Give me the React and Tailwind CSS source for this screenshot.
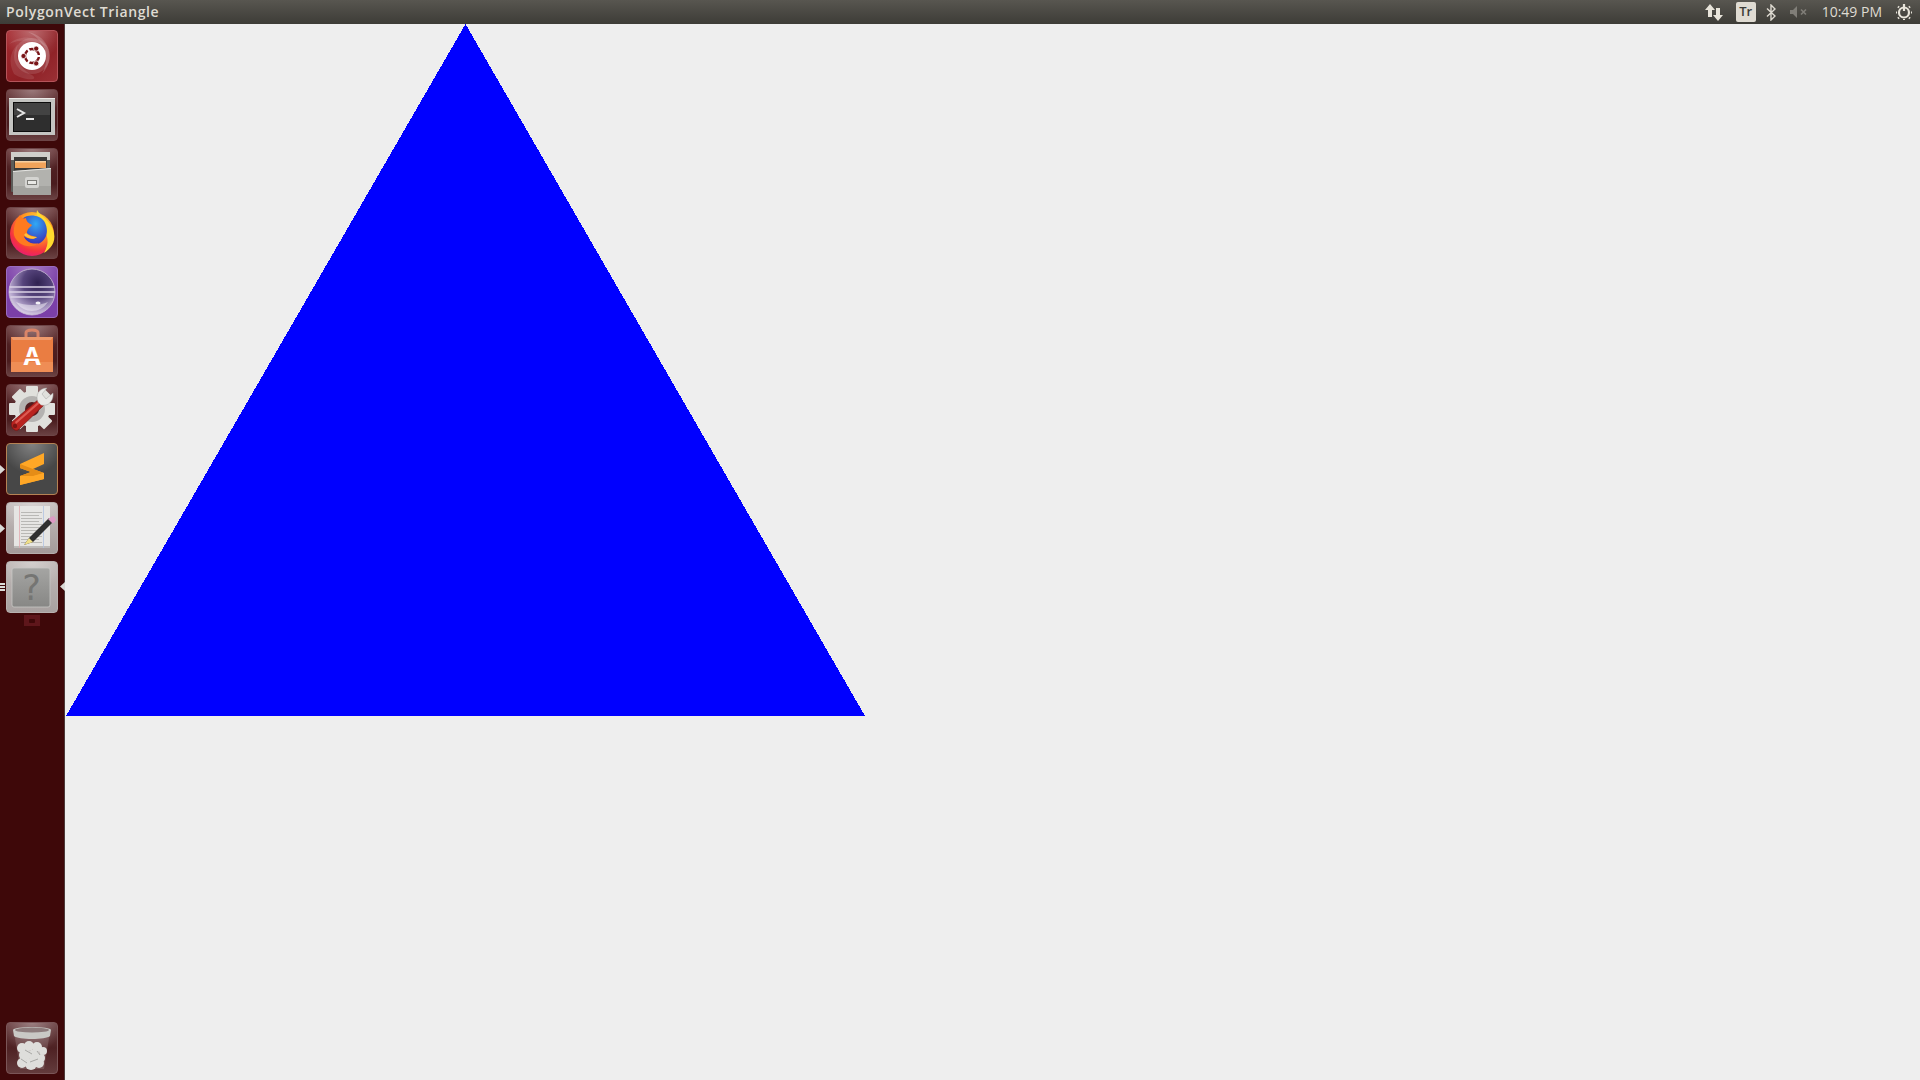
import { useId } from 'react';

// launcher tile, 52x52, with the glossy top every unity icon has
function Tile({ base, border, children, pips = 0, active = false }) {
  const id = useId();
  return (
    <div className="relative h-[52px] w-[52px]">
      {pips > 0 && (
        <div className="absolute left-[-6px] top-0 flex h-full flex-col justify-center gap-[1px]">
          {pips === 1 ? (
            <svg width="5" height="9" viewBox="0 0 5 9"><polygon points="0,0 5,4.5 0,9" fill="#d9d9d6" /></svg>
          ) : (
            <>
              <div className="h-[2px] w-[5px] bg-[#dcdcd8]" />
              <div className="h-[2px] w-[5px] bg-[#dcdcd8]" />
              <div className="h-[2px] w-[5px] bg-[#dcdcd8]" />
            </>
          )}
        </div>
      )}
      {active && (
        <svg className="absolute right-[-7px] top-[21px]" width="5" height="9" viewBox="0 0 5 9">
          <polygon points="5,0 0,4.5 5,9" fill="#d9d9d6" />
        </svg>
      )}
      <div className="h-full w-full overflow-hidden rounded-[4px] border" style={{ background: base, borderColor: border }}>
        <svg width="52" height="52" viewBox="0 0 52 52" className="m-[-1px] block">
          <defs>
            <radialGradient id={id} cx="0.5" cy="0" r="0.6">
              <stop offset="0" stopColor="#fff" stopOpacity="0.33" />
              <stop offset="1" stopColor="#fff" stopOpacity="0" />
            </radialGradient>
          </defs>
          <rect width="52" height="52" fill={`url(#${id})`} />
          {children}
        </svg>
      </div>
    </div>
  );
}

const DARK_TILE = 'linear-gradient(180deg,#6b3a3c 0%,#4f2022 35%,#4a1c1e 70%,#6a4142 100%)';

function UbuntuTile() {
  return (
    <Tile base="linear-gradient(135deg,#a5282e,#8e2025 60%,#9a3035)" border="#b5545a">
      {/* swirl */}
      <path d="M22 2 C44 6 50 30 36 44 C46 26 38 10 22 2Z" fill="#fff" opacity="0.18" />
      <path d="M3 14 C14 4 34 6 42 18 C32 10 16 8 3 14Z" fill="#fff" opacity="0.1" />
      <path d="M8 44 C2 32 4 22 12 14 C8 26 12 36 24 44 C36 50 20 52 8 44Z" fill="#fff" opacity="0.1" />
      <circle cx="26" cy="26" r="18" fill="#fff" opacity="0.12" />
      <circle cx="26" cy="26" r="14" fill="#fff" />
      <circle cx="26" cy="26" r="7" fill="none" stroke="#7a1518" strokeWidth="2.4" />
      <path d="M31 26 H36 M23.5 21.7 L21 17.3 M23.5 30.3 L21 34.7" stroke="#fff" strokeWidth="2" />
      <circle cx="17.5" cy="26" r="2.6" fill="#7a1518" stroke="#fff" strokeWidth="0.8" />
      <circle cx="30.2" cy="18.6" r="2.6" fill="#7a1518" stroke="#fff" strokeWidth="0.8" />
      <circle cx="30.2" cy="33.4" r="2.6" fill="#7a1518" stroke="#fff" strokeWidth="0.8" />
    </Tile>
  );
}

function TerminalTile() {
  return (
    <Tile base={DARK_TILE} border="#6d4547">
      <rect x="3" y="9" width="46" height="37" fill="#c4c4c1" />
      <rect x="3" y="9" width="46" height="1" fill="#ecebe9" />
      <rect x="7" y="13" width="38" height="30" fill="#0c0c0c" />
      <rect x="8" y="14" width="36" height="28" fill="#2e2e2e" />
      <rect x="8" y="14" width="36" height="12" fill="#434343" />
      <path d="M11 20 L18 24 L11 28" fill="none" stroke="#e6e6e6" strokeWidth="2" />
      <rect x="20" y="29" width="8" height="2" fill="#e6e6e6" />
    </Tile>
  );
}

function FilesTile() {
  return (
    <Tile base={DARK_TILE} border="#6d4547">
      <rect x="5" y="4" width="39" height="40" rx="1" fill="#5c5c59" />
      <rect x="5" y="4" width="39" height="8" fill="#cfcfcb" />
      <rect x="8" y="9" width="33" height="16" fill="#3b3a38" />
      <rect x="9" y="13" width="31" height="7" fill="#f0a35a" />
      <rect x="9" y="13" width="31" height="1.5" fill="#f6cfa0" />
      <polygon points="7,23 45,20 45,47 7,47" fill="#b2b2ae" />
      <polygon points="7,23 45,20 45,21 7,24" fill="#e4e4e1" />
      <rect x="7" y="38" width="38" height="9" fill="#a3a39f" />
      <rect x="19" y="29" width="14" height="11" rx="2" fill="#d4d4d1" />
      <rect x="21" y="32" width="10" height="5" fill="#7c7c78" />
      <rect x="22" y="33" width="8" height="3" fill="#e8e8e5" />
    </Tile>
  );
}

function FirefoxTile() {
  return (
    <Tile base={DARK_TILE} border="#6d4547">
      <defs>
        <radialGradient id="fxBody" cx="0.62" cy="0.25" r="0.85">
          <stop offset="0" stopColor="#ffe14d" />
          <stop offset="0.4" stopColor="#ff9a1f" />
          <stop offset="0.75" stopColor="#f5333f" />
          <stop offset="1" stopColor="#e31587" />
        </radialGradient>
        <radialGradient id="fxGlobe" cx="0.55" cy="0.3" r="0.75">
          <stop offset="0" stopColor="#30a9f5" />
          <stop offset="1" stopColor="#3a2ab5" />
        </radialGradient>
      </defs>
      <circle cx="26" cy="27" r="22" fill="url(#fxBody)" />
      <path d="M31 3 C34 9 46 14 48 26 C50 36 44 42 38 46 C44 36 42 28 36 20 C31 14 30 8 31 3Z" fill="#ffd92e" />
      <path d="M16 12 C22 6 34 8 38 14 C44 24 40 34 32 37 C26 38 18 34 16 26Z" fill="url(#fxGlobe)" />
      <path d="M14 8 C9 14 7 22 8 28 C11 38 24 43 33 36 C26 38 19 35 18 29 C21 32 28 33 31 30 C27 29 24 29 21 26 C21 21 25 20 26 18 C22 16 20 14 20 11 C18 12 15 11 14 8Z" fill="#ff7a1f" />
      <path d="M18 28 C22 32 28 33 31 30 C27 30 23 29 20 26Z" fill="#ffc43a" />
    </Tile>
  );
}

function EclipseTile() {
  return (
    <Tile base="#7b3fa8" border="#9a6cc0">
      <defs>
        <radialGradient id="eclSphere" cx="0.62" cy="0.3" r="0.8">
          <stop offset="0" stopColor="#2f2150" />
          <stop offset="0.4" stopColor="#56447c" />
          <stop offset="0.75" stopColor="#b3a3cb" />
          <stop offset="1" stopColor="#f0ebf4" />
        </radialGradient>
      </defs>
      <circle cx="26" cy="26" r="23" fill="url(#eclSphere)" stroke="#c9bdd6" strokeWidth="0.8" />
      <path d="M3.5 21 H48.5 M3.2 26 H48.8 M4.5 31 H47.5" stroke="#dcd2e6" strokeWidth="1.5" />
      <path d="M10 36 C18 48 34 48 42 36 C34 40 18 40 10 36Z" fill="#fff" opacity="0.45" />
      <ellipse cx="32" cy="37" rx="2.5" ry="1.5" fill="#fff" opacity="0.9" />
    </Tile>
  );
}

function SoftwareTile() {
  return (
    <Tile base={DARK_TILE} border="#6d4547">
      <path d="M20 15 V8 C20 4 32 4 32 8 V15" fill="none" stroke="#d98468" strokeWidth="3" />
      <polygon points="5,12 47,12 47,47 5,47" fill="#ea7d42" />
      <polygon points="5,12 47,12 45,15 7,15" fill="#ee9a6c" />
      <rect x="5" y="37" width="42" height="10" fill="#ef8d55" />
      <text x="26" y="40" textAnchor="middle" fill="#fff" fontSize="25" fontWeight="700" fontFamily="'Open Sans',sans-serif">A</text>
      <rect x="17" y="32" width="18" height="1.6" fill="#ea7d42" />
    </Tile>
  );
}

function SettingsTile() {
  const teeth = [0, 45, 90, 135, 180, 225, 270, 315];
  return (
    <Tile base={DARK_TILE} border="#6d4547">
      <g fill="#e0e0dc">
        {teeth.map(a => (
          <rect key={a} x="20" y="2" width="12" height="10" rx="1" transform={`rotate(${a} 26 25)`} />
        ))}
        <circle cx="26" cy="25" r="18" />
      </g>
      <circle cx="26" cy="25" r="13" fill="#b4b2b0" />
      <circle cx="26" cy="25" r="7" fill="#521d20" />
      <path d="M6 38 L33 15 L38 21 L12 46 C8 48 4 42 6 38Z" fill="#b9231f" stroke="#7a1412" strokeWidth="0.7" />
      <path d="M9 38 L33 17 L34 19 L10 40Z" fill="#dc5a52" />
      <circle cx="9" cy="42" r="2.2" fill="#7d1613" />
      <path d="M32 18 C29 11 33 4 41 4 L36 10 L40 15 L47 9 C48 17 42 23 35 21Z" fill="#e9e9e6" stroke="#a5a5a2" strokeWidth="0.5" />
    </Tile>
  );
}

function SublimeTile() {
  return (
    <Tile base="#474747" border="#b58254" pips={1}>
      <polygon points="14,21 38,10 38,21 27,26 38,30 38,36 14,42 14,33 25,29 14,25" fill="#ffa726" />
      <polygon points="14,21 14,25 25,29 14,33 14,33 27,33 38,30 27,26" fill="#e58d17" />
      <polygon points="14,42 38,36 38,30 14,37" fill="#ffa726" />
    </Tile>
  );
}

function EditorTile() {
  return (
    <Tile base="linear-gradient(180deg,#c4bdbc,#a49b9a)" border="#b5adac" pips={1}>
      <rect x="8" y="4" width="36" height="42" fill="#e6e5e3" />
      <rect x="8" y="44" width="36" height="2" fill="#bcbab8" />
      <rect x="13" y="4" width="0.8" height="42" fill="#e3aab0" />
      <rect x="37" y="4" width="0.8" height="42" fill="#b2c4e2" />
      {[10, 13, 16, 19, 22, 25, 28, 31, 34, 37, 40].map(y => (
        <rect key={y} x="15" y={y} width={y % 2 ? 18 : 21} height="1" fill="#8b8b88" opacity="0.5" />
      ))}
      <polygon points="23,36 43,16 47,20 27,40 18,43" fill="#2f2f2f" />
      <polygon points="23,36 27,40 18,43" fill="#f0e08a" />
      <polygon points="42,17 45,15 48,14 50,18 48,21 46,21" fill="#dd9ac4" />
    </Tile>
  );
}

function HelpTile() {
  return (
    <Tile base="linear-gradient(180deg,#bfb8b6,#a8a1a0)" border="#b8b1b0" pips={3} active>
      <defs>
        <linearGradient id="helpBox" x1="0" y1="0" x2="0" y2="1">
          <stop offset="0" stopColor="#a5a5a3" />
          <stop offset="1" stopColor="#878785" />
        </linearGradient>
      </defs>
      <rect x="6" y="7" width="38" height="39" rx="2" fill="url(#helpBox)" stroke="#c7c6c4" strokeWidth="0.8" />
      <text x="25.5" y="39" textAnchor="middle" fill="#757573" fontSize="35" fontFamily="'DejaVu Sans',sans-serif">?</text>
    </Tile>
  );
}

function TrashTile() {
  const paper = [[16, 26, 5], [23, 24, 5], [31, 25, 5], [37, 29, 4], [19, 33, 6], [28, 33, 6], [35, 36, 4], [16, 41, 5], [25, 42, 6], [33, 41, 5]];
  return (
    <Tile base="linear-gradient(180deg,#6b4143,#4e2123 50%,#633b3c)" border="#7a5557">
      <path d="M8 10 H44 L38 47 H14Z" fill="#fff" opacity="0.14" />
      {paper.map(([x, y, r]) => (
        <circle key={`${x}-${y}`} cx={x} cy={y} r={r} fill="#dededb" />
      ))}
      <path d="M19 28 L26 32 M24 40 L32 37 M15 37 L21 41 M31 29 L34 33" stroke="#a8a8a5" strokeWidth="1" />
      <path d="M7 8 C7 4 45 4 45 8 L44 14 C40 18 12 18 8 14Z" fill="#c9c9c5" />
      <ellipse cx="26" cy="8" rx="17" ry="2.6" fill="#8d7c7c" />
    </Tile>
  );
}

function TopBar() {
  return (
    <header className="flex h-6 shrink-0 items-center bg-gradient-to-b from-[#585650] to-[#3d3c37] pl-[6px] text-[#dfdbd2]">
      <span className="font-['Open_Sans',sans-serif] text-[14px] font-semibold leading-none tracking-[0.6px]">PolygonVect Triangle</span>
      <div className="ml-auto flex items-center">
        <svg width="18" height="17" viewBox="0 0 18 17" fill="#e8e4da">
          <polygon points="5,0 10,6 7,6 7,13 3,13 3,6 0,6" />
          <polygon points="13,17 18,11 15,11 15,4 11,4 11,11 8,11" />
        </svg>
        <div className="ml-[13px] flex h-5 w-5 items-center justify-center rounded-[2px] bg-[#dfdbd2] font-['Open_Sans',sans-serif] text-[13px] font-semibold text-[#3c3b37]">Tr</div>
        <svg className="ml-[10px]" width="10" height="17" viewBox="0 0 10 17" fill="none" stroke="#dfdbd2" strokeWidth="1.4">
          <path d="M1 4.5 L9 12 L5 16 V1 L9 5 L1 12.5" />
        </svg>
        <svg className="ml-[14px]" width="18" height="12" viewBox="0 0 18 12">
          <polygon points="0,4 3,4 7,0 7,12 3,8 0,8" fill="#807e78" />
          <path d="M11 3.5 L16 8.5 M16 3.5 L11 8.5" stroke="#807e78" strokeWidth="1.6" />
        </svg>
        <span className="ml-[14px] font-['Open_Sans',sans-serif] text-[14px] leading-none">10:49 PM</span>
        <svg className="ml-[14px] mr-2" width="16" height="16" viewBox="0 0 16 16" fill="none" stroke="#e8e4da">
          <circle cx="8" cy="8.5" r="5" strokeWidth="2.2" />
          <path d="M8 0 V7" strokeWidth="2.2" />
          <path d="M1 8.5 H0 M16 8.5 H15 M3 3.5 L2 2.5 M13 3.5 L14 2.5 M3 13.5 L2 14.5 M13 13.5 L14 14.5 M8 15 V16" strokeWidth="2" />
        </svg>
      </div>
    </header>
  );
}

export default function App() {
  return (
    <div className="flex h-screen w-full flex-col overflow-hidden bg-[#eeeeee]">
      <TopBar />
      <div className="flex min-h-0 flex-1">
        {/* Launcher */}
        <aside className="flex w-[65px] shrink-0 flex-col items-start border-r border-[#4d3a3a] bg-[#3e0809] pb-[6px] pl-[6px] pt-[6px]">
          <div className="flex flex-col gap-[7px]">
            <UbuntuTile />
            <TerminalTile />
            <FilesTile />
            <FirefoxTile />
            <EclipseTile />
            <SoftwareTile />
            <SettingsTile />
            <SublimeTile />
            <EditorTile />
            <HelpTile />
          </div>
          <div className="ml-[18px] mt-[2px] flex h-[11px] w-4 items-center justify-center bg-[#5e161b]">
            <div className="h-1 w-[6px] rounded-[1px] bg-[#3e0809]" />
          </div>
          <div className="mt-auto">
            <TrashTile />
          </div>
        </aside>

        {/* Window content */}
        <main className="min-w-0 flex-1 pl-px">
          <svg width="799" height="692" viewBox="0 0 799 692" className="block" shapeRendering="crispEdges">
            <polygon points="399.5,0 799,692 0,692" fill="#0000ff" />
          </svg>
        </main>
      </div>
    </div>
  );
}
